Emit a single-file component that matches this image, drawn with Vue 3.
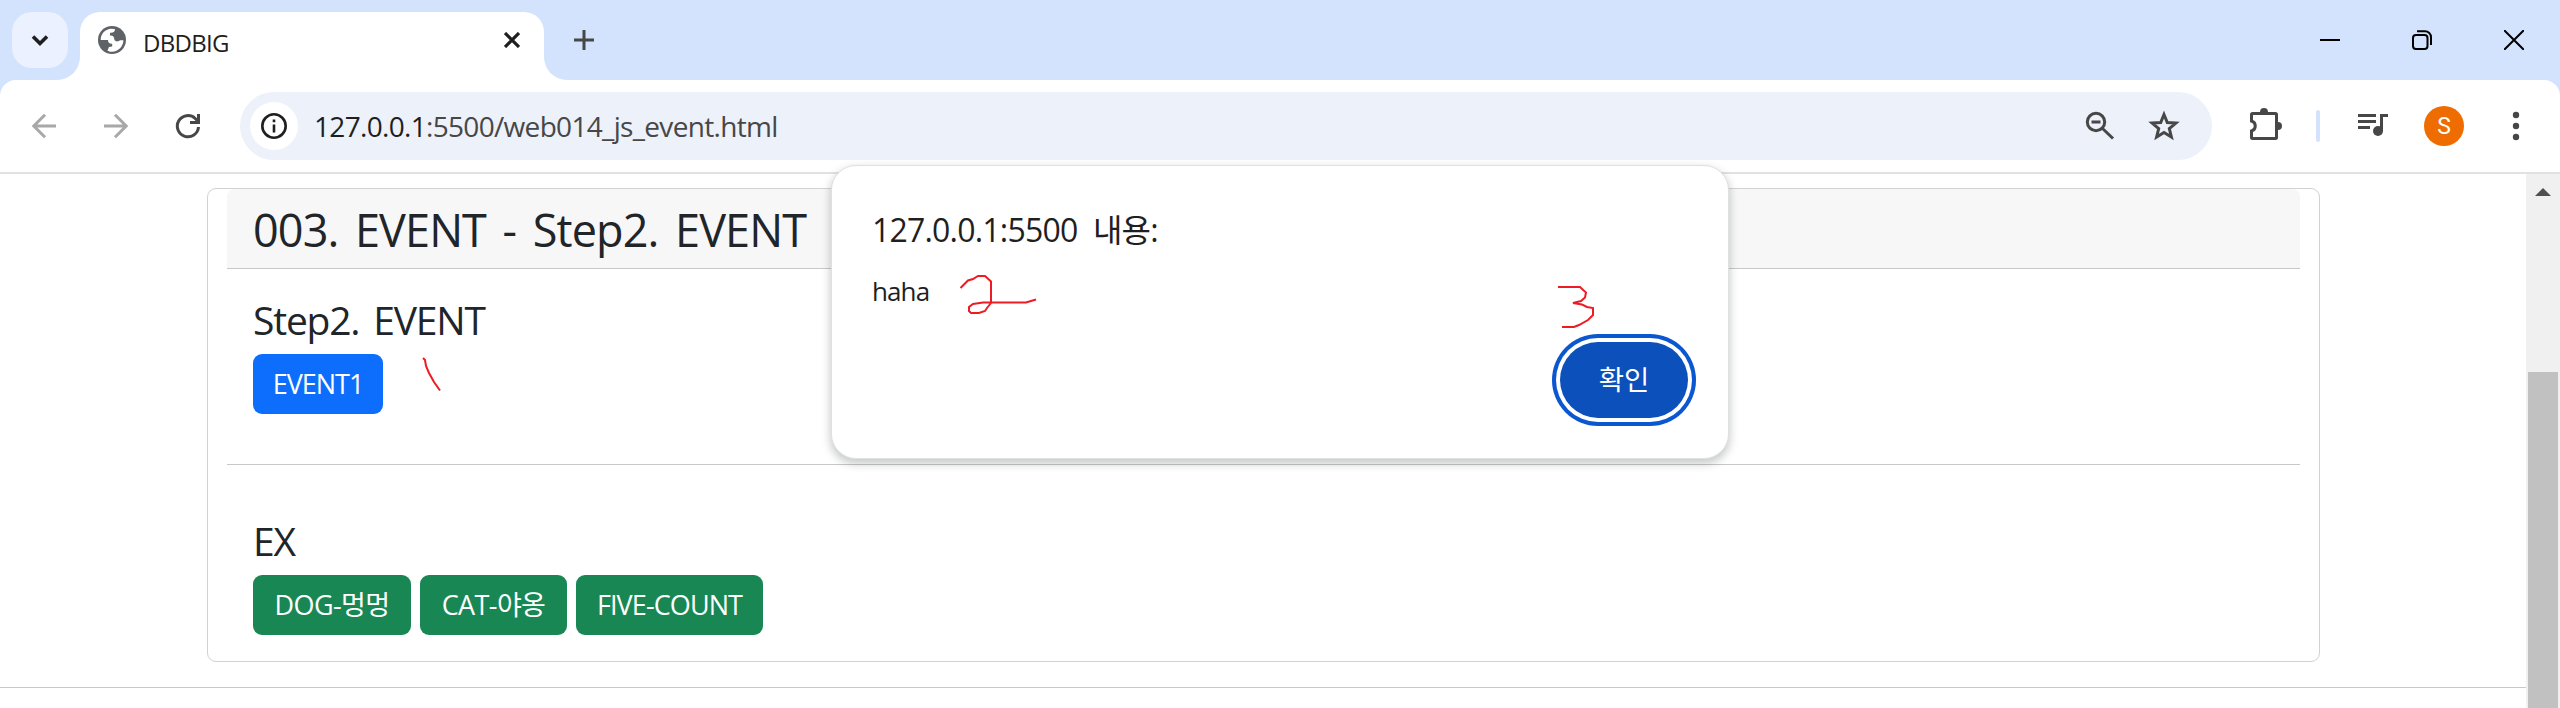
<script setup>
const zones = [
  { title: 'Step2. EVENT', cls: 'first', buttons: [{ label: 'EVENT1', tone: 'primary', w: 130, t: 'b-event' }] },
  {
    title: 'EX',
    cls: 'second',
    buttons: [
      { label: 'DOG-멍멍', tone: 'success', w: 158, t: 'b-dog' },
      { label: 'CAT-야옹', tone: 'success', w: 147, t: 'b-cat' },
      { label: 'FIVE-COUNT', tone: 'success', w: 187, t: 'b-five' },
    ],
  },
]
</script>

<template>
  <div class="window">
    <header class="strip">
      <div class="search-tabs">
        <svg width="56" height="56" viewBox="12 12 56 56"><path d="M33 36.5l7 7 7-7" fill="none" stroke="#1f1f1f" stroke-width="3.6" /></svg>
      </div>
      <div class="tab">
        <svg class="flare left" width="23" height="23" viewBox="0 0 23 23"><path d="M23 0V23H0A23 23 0 0 0 23 0Z" fill="#fff" /></svg>
        <svg class="globe" width="28" height="28" viewBox="0 0 28 28">
          <circle cx="14" cy="14" r="14" fill="#5f6368" />
          <path d="M2.700 14C2.700 8 7 3.300 12.500 2.700l4.300.3c.3 2.700-.9 3.700-4.800 3.800v2.600c3 0 4.400 1.200 4.400 4.600 1.200 1.700 3.800 1.900 5.800.3h3.200c0 6-5 11.300-11.400 11.400-2 0-3.500-.5-4.500-1.300l1.500-3.500 3.200-.3v-2.900c-2.700.2-4.200-.8-4.200-3.700z" fill="#fff" />
        </svg>
        <span class="tab-title">DBDBIG</span>
        <svg class="tab-close" width="16" height="16" viewBox="0 0 16 16"><path d="M1 1l14 14M15 1L1 15" stroke="#1f1f1f" stroke-width="3.2" /></svg>
        <svg class="flare right" width="23" height="23" viewBox="0 0 23 23"><path d="M0 0V23H23A23 23 0 0 1 0 0Z" fill="#fff" /></svg>
      </div>
      <svg class="plus" width="20" height="20" viewBox="0 0 20 20"><path d="M10 0v20M0 10h20" stroke="#474747" stroke-width="3" /></svg>
      <div class="win-buttons">
        <svg width="20" height="20" viewBox="0 0 20 20"><path d="M0 10h20" stroke="#000" stroke-width="2" /></svg>
        <svg width="20" height="20" viewBox="0 0 20 20" fill="none" stroke="#000" stroke-width="2"><rect x="1" y="5" width="14.500" height="14" rx="3" /><path d="M5 1.200h8a6 6 0 0 1 6 6V15" /></svg>
        <svg width="20" height="20" viewBox="0 0 20 20"><path d="M0 0l20 20M20 0L0 20" stroke="#000" stroke-width="2" /></svg>
      </div>
    </header>

    <div class="toolbar">
      <svg class="nav" width="240" height="92" viewBox="0 80 240 92" fill="none" stroke-width="3">
        <path d="M56 126H34M45 114.800L33.800 126 45 137.200" stroke="#a8a8a8" />
        <path d="M104 126h22M115 114.800L126.200 126 115 137.200" stroke="#a8a8a8" />
        <path d="M198.500 127a10.600 10.600 0 1 1-3.300-8.500l3 3" stroke="#474747" />
        <path d="M198.500 114v8.500H190" stroke="#474747" />
      </svg>
      <div class="omnibox">
        <div class="info">
          <svg width="26" height="26" viewBox="0 0 26 26"><circle cx="13" cy="13" r="11.700" fill="none" stroke="#1f1f1f" stroke-width="2.600" /><path d="M13 11.500v8M13 6.500v2.700" stroke="#1f1f1f" stroke-width="2.600" /></svg>
        </div>
        <div class="url"><b>127.0.0.1</b>:5500/web014_js_event.html</div>
      </div>
      <svg class="tools" width="520" height="92" viewBox="2040 80 520 92" fill="none" stroke="#474747" stroke-width="3">
        <circle cx="2096" cy="122" r="8.700" />
        <path d="M2091.500 122h9M2102 128l11 10.500" />
        <path d="M2164 114.500l3.300 8 8.600.6-6.600 5.500 2.100 8.400-7.400-4.600-7.400 4.600 2.100-8.400-6.600-5.500 8.600-.6z" />
        <path d="M2252.500 113.500h23a1 1 0 0 1 1 1v23a1 1 0 0 1-1 1h-23a1 1 0 0 1-1-1v-6.500a5.200 5.200 0 0 0 0-10v-6.500a1 1 0 0 1 1-1z" />
        <path d="M2260 112a4 4 0 0 1 8 0zM2278 122a4 4 0 0 1 0 8z" fill="#474747" stroke="none" />
        <rect x="2316" y="110" width="4" height="32" rx="2" fill="#d3e3fd" stroke="none" />
        <path d="M2358 115.500h18M2358 121.500h18M2358 127.500h12M2381.500 131v-15.500h6.500" />
        <circle cx="2378" cy="131" r="5" fill="#474747" stroke="none" />
        <circle cx="2444" cy="126" r="20" fill="#ef6c00" stroke="none" />
        <text x="2444" y="134" class="avatar" text-anchor="middle">S</text>
        <g fill="#474747" stroke="none"><circle cx="2516" cy="115" r="3.200" /><circle cx="2516" cy="126" r="3.200" /><circle cx="2516" cy="137" r="3.200" /></g>
      </svg>
    </div>

    <main class="page">
      <div class="content">
        <section class="card">
          <h2 class="card-header"><span>003. EVENT - Step2. EVENT</span></h2>
          <div v-for="z in zones" :key="z.title" class="zone" :class="z.cls">
            <h3><span>{{ z.title }}</span></h3>
            <div class="row">
              <button v-for="b in z.buttons" :key="b.label" :class="b.tone" :style="{ width: b.w + 'px' }"><span :class="b.t">{{ b.label }}</span></button>
            </div>
          </div>
        </section>
      </div>
      <aside class="scrollbar">
        <svg width="16" height="8" viewBox="0 0 16 8"><path d="M0 8L8 0l8 8z" fill="#505050" /></svg>
        <div class="thumb"></div>
      </aside>
    </main>

    <div class="dialog">
      <div class="dlg-title"><span>127.0.0.1:5500 내용:</span></div>
      <div class="dlg-msg"><span>haha</span></div>
      <div class="dlg-actions"><button class="ok">확인</button></div>
    </div>

    <svg class="ink" width="2560" height="708" viewBox="0 0 2560 708" fill="none" stroke="#ed1c24" stroke-width="2">
      <path d="M423 358l2 2 1 6 3 7 5 9 6 8.500" />
      <path d="M960.500 288l7.500-7.500 5-1.500 5-3h7l6 5.500V303l-4 5-2 3-6 2h-8l-2-2v-4l4-3 10-1.500h43l10-3" />
      <path d="M1558 287h22l6 5.500-1 5-4 3.500-8 2 9 1.500 5 2.500 6 1v7l-5 5-9 5-5 2h-12" />
    </svg>
  </div>
</template>

<style>
body { margin: 0; overflow: hidden; }
</style>

<style scoped>
* { box-sizing: border-box; }
.window { position: relative; width: 2560px; height: 708px; overflow: hidden; background: #d3e3fd; font-family: "Open Sans", "Noto Sans CJK KR", sans-serif; color: #1f1f1f; }
.window span { white-space: pre; }
.strip { height: 80px; display: flex; padding: 12px 34px 0 12px; }
.search-tabs { width: 56px; height: 56px; border-radius: 20px; background: #ebf1fe; }
.tab { position: relative; margin-left: 12px; width: 464px; height: 68px; background: #fff; border-radius: 20px 20px 0 0; display: flex; padding: 14px 24px 0 18px; }
.flare { position: absolute; bottom: 0; }
.flare.left { left: -23px; }
.flare.right { right: -23px; }
.tab-title { margin-left: 17px; font-size: 24px; line-height: 34px; letter-spacing: -0.7px; }
.tab-close { margin: 6px 0 0 auto; }
.plus { margin: 18px 0 0 30px; }
.win-buttons { display: flex; gap: 72px; margin: 18px 2px 0 auto; }
.toolbar { height: 94px; background: #fff; border-bottom: 2px solid #e1e1e1; border-radius: 16px 16px 0 0; display: flex; }
.omnibox { flex: 1; margin: 12px -172px 12px 0; height: 68px; border-radius: 34px; background: #ecf1fa; display: flex; align-items: center; padding-left: 10px; }
.info { width: 48px; height: 48px; border-radius: 50%; background: #fff; display: grid; place-items: center; }
.url { margin-left: 16px; font-size: 28px; letter-spacing: -0.68px; color: #474747; }
.url b { font-weight: 400; color: #1f1f1f; }
.tools { z-index: 1; }
.avatar { font: 23px Roboto, sans-serif; fill: #fff; stroke: none; }
.page { height: 534px; background: #fff; display: flex; }
.content { width: 2526px; height: 514px; border-bottom: 1px solid #c7c8c9; padding: 14px 206px 0 207px; }
.card { height: 474px; border: 1px solid #d2d2d2; border-radius: 9px; padding: 0 19px; }
.card-header { margin: 0; height: 80px; background: #f7f7f7; border-bottom: 1px solid #c8c8c8; border-radius: 8px 8px 0 0; padding-left: 26px; font-size: 45px; font-weight: 400; line-height: 81px; color: #212529; letter-spacing: -0.9px; word-spacing: 5.8px; }
.zone { padding-left: 26px; color: #212529; }
.zone.first { height: 196px; padding-top: 25px; border-bottom: 1px solid #c7c8c9; }
.zone.second { padding-top: 50px; }
h3 { margin: 0; height: 60px; font-size: 39px; font-weight: 400; line-height: 51px; letter-spacing: -1.2px; word-spacing: 5px; }
.row { display: flex; gap: 9px; }
button { height: 60px; padding: 0; border: 0; border-radius: 9px; color: #fff; font: 27px/60px "Open Sans", "Noto Sans CJK KR", sans-serif; letter-spacing: -1px; }
.b-dog, .b-cat { letter-spacing: -0.6px; }
.b-five { letter-spacing: -0.9px; }
.primary { background: #0d6efd; }
.success { background: #198754; }
.scrollbar { width: 34px; background: #f0f0f0; display: flex; flex-direction: column; align-items: center; padding-top: 14px; }
.thumb { width: 30px; height: 336px; margin-top: 176px; background: #c1c1c1; }
.dialog { position: absolute; left: 831px; top: 165px; width: 898px; height: 294px; padding: 42px 40px 0 40px; border: 1px solid #dfe1e0; border-radius: 25px; background: #fff; box-shadow: 0 4px 8px 1px rgba(60, 70, 65, 0.28); }
.dlg-title { height: 48px; font-size: 32px; line-height: 44px; letter-spacing: -0.8px; word-spacing: 8px; }
.dlg-msg { height: 86px; font-size: 26px; line-height: 70px; letter-spacing: -0.9px; }
.dlg-actions { display: flex; justify-content: flex-end; }
.ok { width: 128px; height: 76px; border-radius: 38px; background: #0c50bc; font-size: 27.500px; line-height: 74px; letter-spacing: 0; box-shadow: 0 0 0 4px #fff, 0 0 0 8px #0b57d0; }
.ink { position: absolute; left: 0; top: 0; pointer-events: none; }
</style>
